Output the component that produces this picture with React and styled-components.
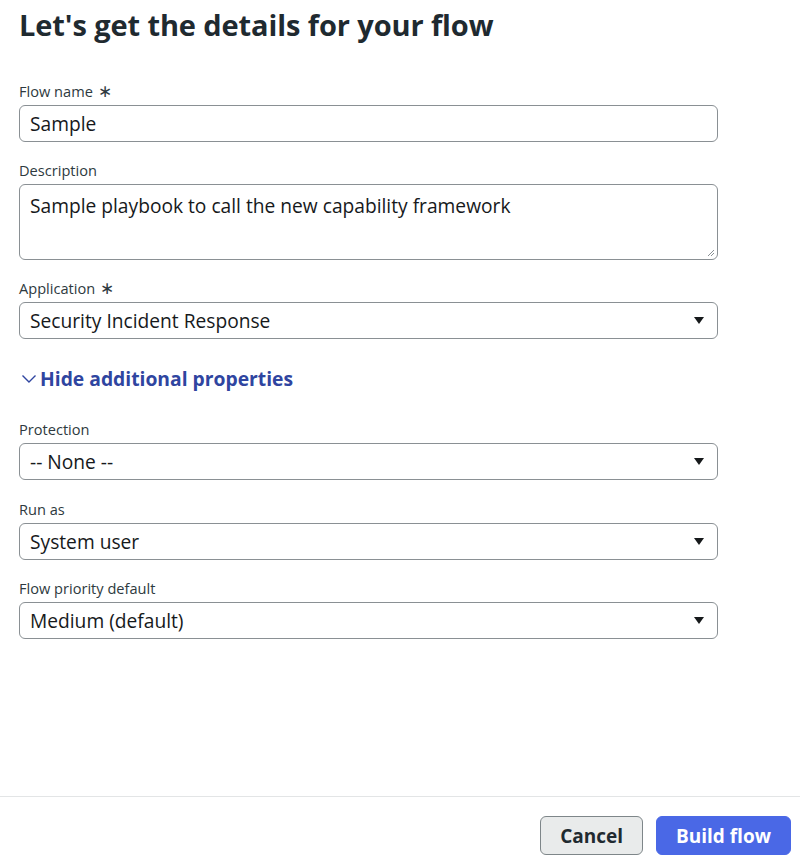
import React from "react";
import styled, { createGlobalStyle } from "styled-components";

const GlobalStyle = createGlobalStyle`
	body {
		margin: 0;
		font-family: "Open Sans", "Noto Sans", sans-serif;
		color: #1f2a30;
		background: #fff;
	}
`;

const Page = styled.div`
	display: flex;
	flex-direction: column;
	min-height: 100vh;
	box-sizing: border-box;
`;

const Form = styled.div`
	flex: 1;
	padding: 0 82px 0 19px;
`;

const Title = styled.h1`
	font-size: 29px;
	font-weight: 700;
	line-height: 36px;
	margin: 7px 0 39px;
	letter-spacing: -0.1px;
	color: #1f2a30;
`;

const Field = styled.div`
	display: flex;
	flex-direction: column;
	gap: 5px;
	margin-bottom: ${(p) => p.$gap || 19}px;
`;

const Label = styled.label`
	font-size: 14.6px;
	line-height: 18px;
	color: #2e3a40;
	display: flex;
	align-items: center;
	gap: 5px;
`;

const Star = styled.span`
	font-size: 17px;
	line-height: 14px;
	color: #2e3a40;
`;

const Box = styled.div`
	box-sizing: border-box;
	height: ${(p) => p.$height || 37}px;
	border: 1px solid #8a9094;
	border-radius: 6px;
	padding: ${(p) => (p.$multi ? "8px 10px" : "0 10px")};
	display: flex;
	align-items: ${(p) => (p.$multi ? "flex-start" : "center")};
	justify-content: space-between;
	font-size: 19.2px;
	line-height: 26px;
	color: #16191b;
	position: relative;
`;

const Caret = styled.span`
	width: 0;
	height: 0;
	border-left: 5.5px solid transparent;
	border-right: 5.5px solid transparent;
	border-top: 7px solid #16191b;
	margin-right: 3px;
`;

const Grip = styled.svg`
	position: absolute;
	right: 2px;
	bottom: 2px;
`;

const Toggle = styled.button`
	display: flex;
	align-items: center;
	gap: 3px;
	background: none;
	border: none;
	padding: 0 0 0 2px;
	margin: 26px 0 28px;
	font-family: inherit;
	font-size: 19.3px;
	line-height: 27px;
	font-weight: 700;
	color: #2f45a0;
	cursor: pointer;
`;

const Footer = styled.div`
	border-top: 1px solid #e3e5e6;
	display: flex;
	justify-content: flex-end;
	gap: 13px;
	padding: 19px 9px 6px;
`;

const Button = styled.button`
	height: 39px;
	padding: 0 19px;
	border-radius: 6px;
	font-family: inherit;
	font-size: 19px;
	font-weight: 700;
	cursor: pointer;
	border: 1px solid ${(p) => (p.$primary ? "#4a68e6" : "#7e8689")};
	background: ${(p) => (p.$primary ? "#4a68e6" : "#e9ebeb")};
	color: ${(p) => (p.$primary ? "#ffffff" : "#1f2a30")};
`;

const Input = ({ label, required, value, height, multi, select, gap }) => (
	<Field $gap={gap}>
		<Label>
			{label}
			{required && <Star>∗</Star>}
		</Label>
		<Box $height={height} $multi={multi}>
			<span>{value}</span>
			{select && <Caret />}
			{multi && (
				<Grip width="10" height="10" viewBox="0 0 10 10">
					<path d="M9 3 L3 9 M9 6 L6 9" stroke="#8a9094" strokeWidth="1" />
				</Grip>
			)}
		</Box>
	</Field>
);

const App = () => (
	<Page>
		<GlobalStyle />
		<Form>
			<Title>Let's get the details for your flow</Title>
			<Input label="Flow name" required value="Sample" />
			<Input
				label="Description"
				value="Sample playbook to call the new capability framework"
				height={76}
				multi
			/>
			<Input label="Application" required value="Security Incident Response" select />
			<Toggle>
				<svg width="16" height="10" viewBox="0 0 16 10">
					<path d="M1.5 1.5 L8 8 L14.5 1.5" fill="none" stroke="#2f45a0" strokeWidth="1.4" />
				</svg>
				Hide additional properties
			</Toggle>
			<Input label="Protection" value="-- None --" select gap={20} />
			<Input label="Run as" value="System user" select />
			<Input label="Flow priority default" value="Medium (default)" select />
		</Form>
		<Footer>
			<Button>Cancel</Button>
			<Button $primary>Build flow</Button>
		</Footer>
	</Page>
);

export default App;
